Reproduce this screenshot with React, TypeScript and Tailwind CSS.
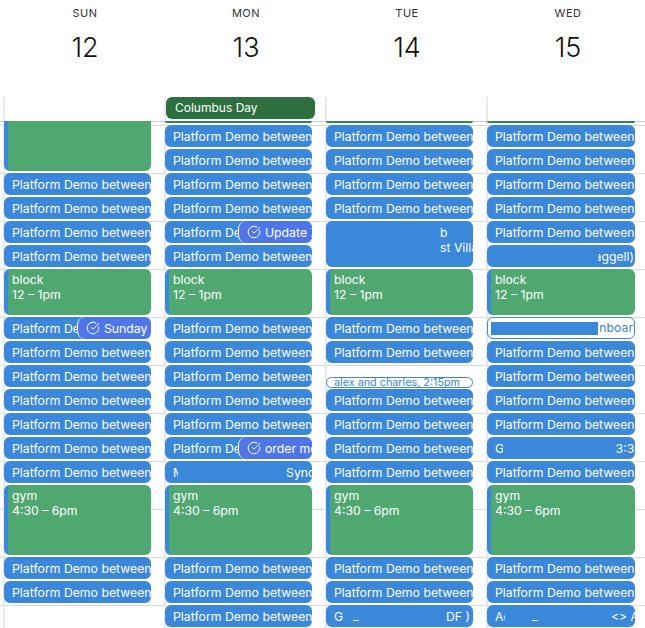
import { CircleCheckBig } from "lucide-react"

const PD = "Platform Demo between"

type Ev = {
  kind: "blue" | "green" | "sliver" | "alex" | "outline"
  title?: string
  time?: string
  tall?: boolean
  pad?: string
  task?: string
  right?: string
  rightPos?: string
  mark?: string
  markPos?: string
}

const pd = (): Ev => ({ kind: "blue", title: PD })
const many = (n: number): Ev[] => Array.from({ length: n }, pd)
const block: Ev = { kind: "green", title: "block", time: "12 – 1pm" }
const gym: Ev = { kind: "green", title: "gym", time: "4:30 – 6pm" }

const days: { name: string; num: number; wide?: boolean; allDay?: string; events: Ev[] }[] = [
  {
    name: "SUN",
    num: 12,
    events: [
      { kind: "green" },
      ...many(4),
      block,
      { kind: "blue", title: PD, task: "Sunday Check" },
      ...many(4),
      { kind: "blue", title: "Platform Demo between," },
      { kind: "blue", title: "Platform Demo between," },
      gym,
      ...many(2),
    ],
  },
  {
    name: "MON",
    num: 13,
    allDay: "Columbus Day",
    events: [
      { kind: "sliver" },
      ...many(4),
      { kind: "blue", title: PD, task: "Update Zoom" },
      pd(),
      block,
      ...many(5),
      { kind: "blue", title: PD, task: "order meds" },
      { kind: "blue", title: "M", pad: "pl-[8px] w-[13px]", right: "Sync", rightPos: "right-[-3px]" },
      gym,
      ...many(3),
    ],
  },
  {
    name: "TUE",
    num: 14,
    events: [
      { kind: "sliver" },
      ...many(4),
      { kind: "blue", tall: true, title: "b", time: "st Villa", pad: "pl-[114px]" },
      block,
      ...many(2),
      { kind: "alex", title: "alex and charles, 2:15pm" },
      ...many(4),
      gym,
      ...many(2),
      { kind: "blue", title: "G", mark: "_", markPos: "left-[27px]", right: "DF )", rightPos: "right-[3px]" },
    ],
  },
  {
    name: "WED",
    num: 15,
    wide: true,
    events: [
      { kind: "sliver" },
      ...many(5),
      { kind: "blue", right: "aggell)", rightPos: "right-[1px] flex w-[36px] justify-end overflow-hidden" },
      block,
      { kind: "outline", title: "nboar" },
      ...many(4),
      { kind: "blue", title: "G", pad: "pl-[8px] w-[16px]", right: "3:30", rightPos: "right-[-7px]" },
      pd(),
      gym,
      ...many(2),
      { kind: "blue", title: "Ad", pad: "pl-[8px] w-[18px]", mark: "_", markPos: "left-[45px]", right: "<> A", rightPos: "right-[-4px]" },
    ],
  },
]

function Event({ ev }: { ev: Ev }) {
  if (ev.kind === "sliver") {
    return <div className="h-[2px] w-full shrink-0 rounded-b-[3px] bg-[#2f8650]" />
  }
  if (ev.kind === "alex") {
    return (
      <div className="mt-[12px] mb-[-1px] h-[11px] w-full shrink-0 overflow-hidden whitespace-nowrap rounded-[6px] border border-[#3b87d9] bg-white pl-[7px] text-[10.8px] leading-[9px] text-[#3b87d9]">
        {ev.title}
      </div>
    )
  }
  if (ev.kind === "outline") {
    return (
      <div className="relative flex h-[22px] w-full shrink-0 items-center justify-end overflow-hidden whitespace-nowrap rounded-[6px] border border-[#3b87d9] bg-white text-[12.25px] text-[#3b87d9]">
        <div className="absolute left-[3px] top-[4px] h-[13px] w-[107px] bg-[#3b87d9]" />
        <span className="pr-[1px]">{ev.title}</span>
      </div>
    )
  }
  if (ev.kind === "green") {
    const h = ev.title === "gym" ? "h-[70px]" : ev.title ? "h-[46px]" : "h-[50px] rounded-t-none"
    return (
      <div className={`w-full shrink-0 overflow-hidden rounded-[6px] border-l-[4px] border-[#3b87d9] bg-[#50a871] pl-[4px] pt-[3px] text-[12.25px] leading-[15px] text-white ${h}`}>
        <div>{ev.title}</div>
        <div>{ev.time}</div>
      </div>
    )
  }
  return (
    <div className={`relative w-full shrink-0 overflow-hidden whitespace-nowrap rounded-[6px] bg-[#3b87d9] text-[12.25px] text-white ${ev.tall ? "h-[46px] pt-[4px] leading-[15px]" : "h-[22px] leading-[23px]"}`}>
      <div className={`overflow-hidden ${ev.pad ?? "pl-[8px]"}`}>
        {ev.title}
        {ev.time && <div>{ev.time}</div>}
      </div>
      {ev.mark && <span className={`absolute top-[-1px] ${ev.markPos}`}>{ev.mark}</span>}
      {ev.right && <span className={`absolute top-0 ${ev.rightPos}`}>{ev.right}</span>}
      {ev.task && (
        <div className="absolute right-0 top-0 flex h-[22px] w-[74px] items-center gap-[4px] overflow-hidden rounded-[8px] border-l border-white bg-[#4f76e8] pl-[8px]">
          <CircleCheckBig size={14} strokeWidth={1.7} className="shrink-0" />
          {ev.task}
        </div>
      )}
    </div>
  )
}

export default function App() {
  return (
    <div className="h-[628px] w-[645px] overflow-hidden bg-white font-['Inter',sans-serif]">
      <div className="grid h-[97px] grid-cols-[repeat(4,161px)] pl-[3px] text-center">
        {days.map((d) => (
          <div key={d.name} className="pl-[3px] pt-[6px]">
            <div className="text-[11px] leading-[14px] tracking-[0.5px] text-[#333]">{d.name}</div>
            <div className="mt-[12px] text-[27px] leading-[32px] font-light text-[#111]">{d.num}</div>
          </div>
        ))}
      </div>
      <div className="grid h-[25px] grid-cols-[repeat(4,161px)] border-b border-[#c9cdd2] pl-[3px]">
        {days.map((d) => (
          <div key={d.name} className="border-l-2 border-[#e6e9ee]">
            {d.allDay && (
              <div className="h-[22px] w-[149px] rounded-[6px] bg-[#2e6f3f] pl-[9px] text-[12px] leading-[22px] text-white">
                {d.allDay}
              </div>
            )}
          </div>
        ))}
      </div>
      <div className="grid h-[506px] grid-cols-[repeat(4,161px)] bg-[repeating-linear-gradient(to_bottom,#d8dce2_0,#d8dce2_1px,transparent_1px,transparent_48px)] bg-[position:0_3px] pl-[3px]">
        {days.map((d) => (
          <div key={d.name} className="h-full border-l-2 border-[#e6e9ee]">
            <div className={`ml-[-1px] mt-[-1px] flex flex-col gap-[2px] ${d.wide ? "w-[148px]" : "w-[147px]"}`}>
              {d.events.map((ev, i) => (
                <Event key={i} ev={ev} />
              ))}
            </div>
          </div>
        ))}
      </div>
    </div>
  )
}
